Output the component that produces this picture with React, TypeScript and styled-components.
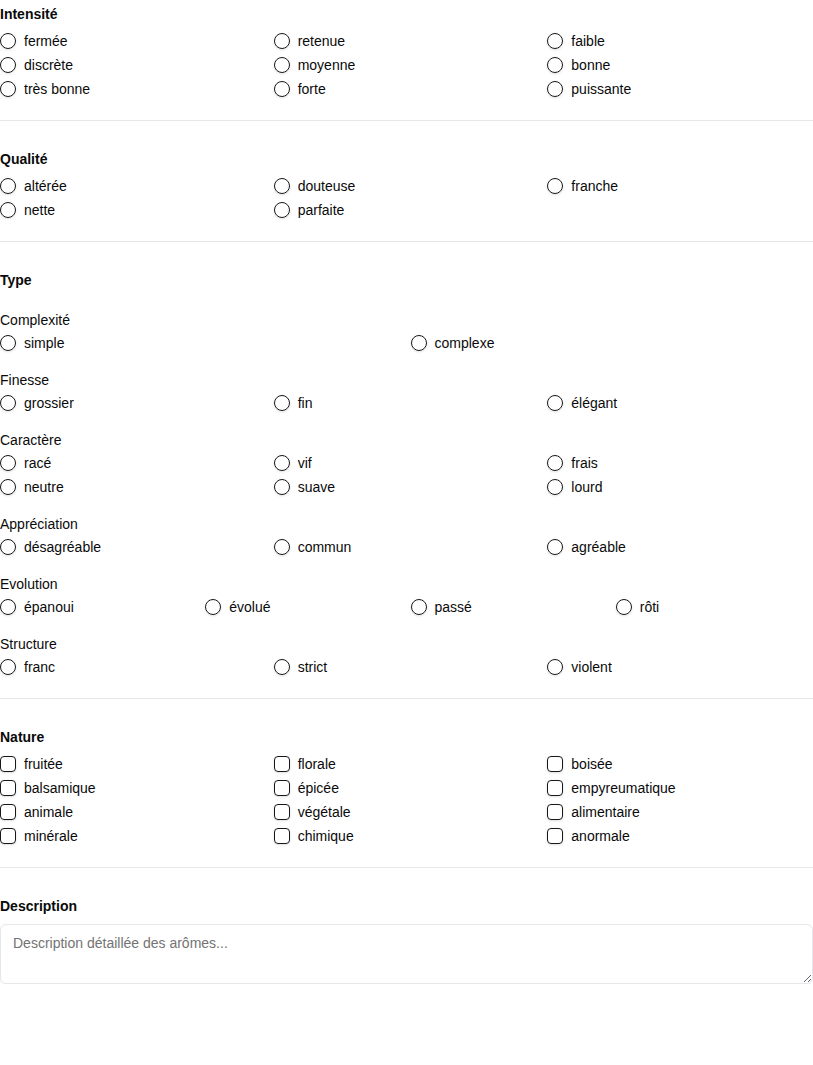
import React from "react";
import styled, { createGlobalStyle } from "styled-components";

const GlobalStyle = createGlobalStyle`
  html, body {
    margin: 0;
    padding: 0;
    background: #ffffff;
  }
  body {
    font-family: "Liberation Sans", Arial, sans-serif;
    font-size: 14px;
    line-height: 20px;
    color: #0a0a0a;
  }
  * { box-sizing: border-box; }
`;

const Page = styled.div`
  width: 813px;
  padding-top: 4px;
`;

const Section = styled.section`
  display: flex;
  flex-direction: column;
`;

const Heading = styled.div`
  font-size: 14px;
  line-height: 20px;
  font-weight: 700;
  margin-bottom: 7px;
`;

const TypeHeading = styled(Heading)`
  margin-bottom: 20px;
`;

const DescHeading = styled(Heading)`
  margin-bottom: 8px;
`;

const SubGroups = styled.div`
  display: flex;
  flex-direction: column;
  gap: 17px;
`;

const SubGroup = styled.div`
  display: flex;
  flex-direction: column;
`;

const SubLabel = styled.div`
  font-size: 14px;
  line-height: 20px;
  margin-bottom: 3px;
`;

const Grid = styled.div<{ $cols: number }>`
  display: grid;
  grid-template-columns: repeat(${(p) => p.$cols}, minmax(0, 1fr));
  column-gap: 8px;
  row-gap: 4px;
`;

const Option = styled.label`
  display: flex;
  align-items: center;
  gap: 8px;
  height: 20px;
  font-size: 14px;
  line-height: 20px;
  cursor: pointer;
`;

const RadioCircle = styled.span`
  width: 16px;
  height: 16px;
  flex: none;
  border-radius: 50%;
  border: 1.25px solid #171717;
  box-shadow: 0 1px 3px 0 rgba(0, 0, 0, 0.1), 0 1px 2px -1px rgba(0, 0, 0, 0.1);
`;

const CheckBox = styled.span`
  width: 16px;
  height: 16px;
  flex: none;
  border-radius: 4px;
  border: 1.25px solid #171717;
  box-shadow: 0 1px 3px 0 rgba(0, 0, 0, 0.1), 0 1px 2px -1px rgba(0, 0, 0, 0.1);
`;

const Divider = styled.hr`
  border: none;
  border-top: 1px solid #e5e7eb;
  margin: 21px 0 28px;
`;

const TextArea = styled.textarea`
  display: block;
  width: 100%;
  height: 60px;
  margin: 0;
  padding: 8px 12px;
  border: 1px solid #e5e7eb;
  border-radius: 6px;
  font-family: "Liberation Sans", Arial, sans-serif;
  font-size: 14px;
  line-height: 20px;
  color: #0a0a0a;
  background: #ffffff;
  box-shadow: 0 1px 2px 0 rgba(0, 0, 0, 0.05);
  outline: none;
  &::placeholder {
    color: #737373;
  }
`;

type Kind = "radio" | "check";

const Options: React.FC<{ items: string[]; cols: number; kind: Kind }> = ({ items, cols, kind }) => (
  <Grid $cols={cols}>
    {items.map((it) => (
      <Option key={it}>
        {kind === "radio" ? <RadioCircle /> : <CheckBox />}
        <span>{it}</span>
      </Option>
    ))}
  </Grid>
);

const typeGroups: { label: string; cols: number; items: string[] }[] = [
  { label: "Complexité", cols: 2, items: ["simple", "complexe"] },
  { label: "Finesse", cols: 3, items: ["grossier", "fin", "élégant"] },
  { label: "Caractère", cols: 3, items: ["racé", "vif", "frais", "neutre", "suave", "lourd"] },
  { label: "Appréciation", cols: 3, items: ["désagréable", "commun", "agréable"] },
  { label: "Evolution", cols: 4, items: ["épanoui", "évolué", "passé", "rôti"] },
  { label: "Structure", cols: 3, items: ["franc", "strict", "violent"] },
];

export default function App() {
  return (
    <>
      <GlobalStyle />
      <Page>
        <Section>
          <Heading>Intensité</Heading>
          <Options
            kind="radio"
            cols={3}
            items={["fermée", "retenue", "faible", "discrète", "moyenne", "bonne", "très bonne", "forte", "puissante"]}
          />
        </Section>
        <Divider />
        <Section>
          <Heading>Qualité</Heading>
          <Options kind="radio" cols={3} items={["altérée", "douteuse", "franche", "nette", "parfaite"]} />
        </Section>
        <Divider />
        <Section>
          <TypeHeading>Type</TypeHeading>
          <SubGroups>
            {typeGroups.map((g) => (
              <SubGroup key={g.label}>
                <SubLabel>{g.label}</SubLabel>
                <Options kind="radio" cols={g.cols} items={g.items} />
              </SubGroup>
            ))}
          </SubGroups>
        </Section>
        <Divider />
        <Section>
          <Heading>Nature</Heading>
          <Options
            kind="check"
            cols={3}
            items={[
              "fruitée", "florale", "boisée",
              "balsamique", "épicée", "empyreumatique",
              "animale", "végétale", "alimentaire",
              "minérale", "chimique", "anormale",
            ]}
          />
        </Section>
        <Divider />
        <Section>
          <DescHeading>Description</DescHeading>
          <TextArea placeholder="Description détaillée des arômes..." />
        </Section>
      </Page>
    </>
  );
}
